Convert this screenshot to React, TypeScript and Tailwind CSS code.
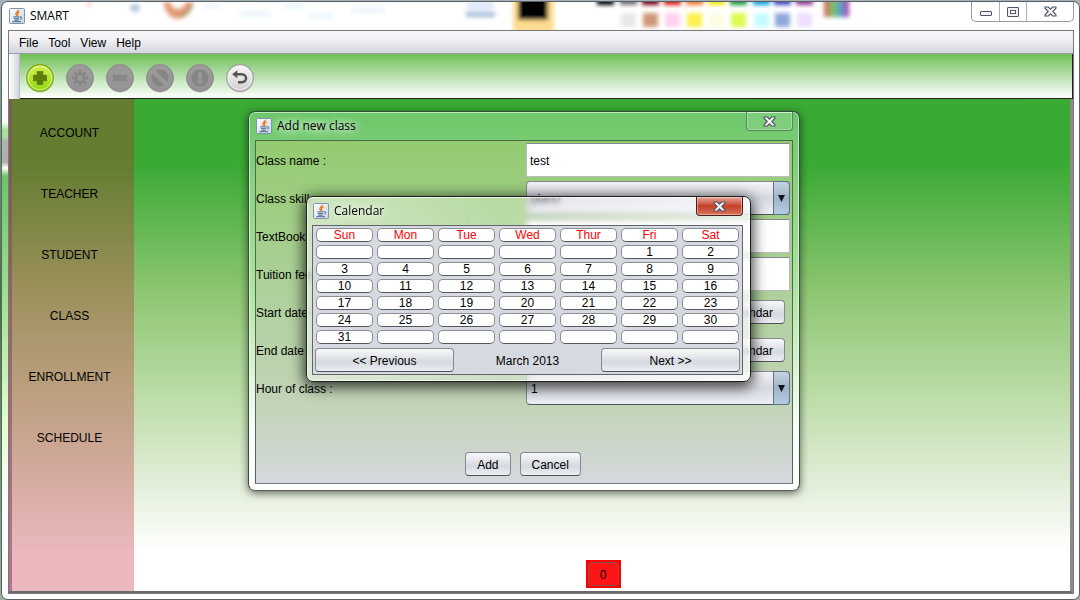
import type { ReactNode } from "react";

const DAYS = ["Sun", "Mon", "Tue", "Wed", "Thur", "Fri", "Sat"];
const FIRST_WEEKDAY = 5;
const DAYS_IN_MONTH = 31;
const CELLS = Array.from({ length: 42 }, (_, i) => {
  const day = i - FIRST_WEEKDAY + 1;
  return day >= 1 && day <= DAYS_IN_MONTH ? String(day) : "";
});
const SECTIONS = ["ACCOUNT", "TEACHER", "STUDENT", "CLASS", "ENROLLMENT", "SCHEDULE"];

function JavaIcon() {
  return (
    <svg width="16" height="16" viewBox="0 0 16 16" className="shrink-0" aria-hidden="true">
      <defs>
        <linearGradient id="tile" x1="0" y1="0" x2="1" y2="1">
          <stop offset="0" stopColor="#ffffff" />
          <stop offset="1" stopColor="#c9d3de" />
        </linearGradient>
      </defs>
      <rect x="0.5" y="0.5" width="15" height="15" rx="1" fill="url(#tile)" stroke="#7f93ab" />
      <path d="M9.200 1.800c.6 1.800-2.900 2.400-2.300 4.200.2.700.9 1 .7 1.900M10.600 3.900c-1.600.6-2.400 1.200-2 2.200.2.700.4 1-.2 1.800" fill="none" stroke="#e8761b" strokeWidth="1.3" />
      <path d="M4.200 8.900h6.400M4.900 10.700h5.300M5.400 12.200h4.200M3.200 13.700h8.800M10.900 8.800c2.600-.5 2.300 2.200.1 2.500" fill="none" stroke="#3f6a96" strokeWidth="1" />
    </svg>
  );
}

function CloseGlyph() {
  return (
    <svg width="13" height="11" viewBox="0 0 13 11" aria-hidden="true">
      <path d="M1 1h3.4l2.1 2.2L8.600 1H12v1.200L8.800 5.500 12 8.800V10H8.600L6.500 7.800 4.400 10H1V8.800l3.200-3.300L1 2.200z" fill="#f4f4f6" stroke="#51555f" strokeWidth="1.1" />
    </svg>
  );
}

function TitleBackdrop() {
  const swatches: [number, string, string][] = [
    [605, "#000000", "#ffffff"],
    [628, "#6f6f6f", "#e8e8e8"],
    [650, "#7d0012", "#cf9878"],
    [672, "#e01818", "#ffd0ec"],
    [694, "#f07a28", "#fff04a"],
    [716, "#f2ec10", "#fdfde0"],
    [738, "#189a3c", "#dcfb50"],
    [761, "#10a0e0", "#c4fcff"],
    [782, "#3a46c4", "#8ea8d8"],
    [804, "#8c3a96", "#ecdfff"],
  ];
  return (
    <svg className="pointer-events-none absolute inset-0 h-full w-full" aria-hidden="true">
      <defs>
        <filter id="soft" x="-30%" y="-30%" width="160%" height="160%">
          <feGaussianBlur stdDeviation="2" />
        </filter>
        <linearGradient id="rainbow">
          <stop offset="0" stopColor="#e06060" />
          <stop offset="0.35" stopColor="#80c060" />
          <stop offset="0.65" stopColor="#50a8c8" />
          <stop offset="1" stopColor="#c030b0" />
        </linearGradient>
      </defs>
      <g filter="url(#soft)" transform="translate(-2 0)">
        <path d="M163 0q4 16 14 17 13-1 16-17l-7 0q-3 7-8 7-6 0-8-7z" fill="#e39a78" />
        <path d="M180 14q9-2 12-12" stroke="#a59a60" strokeWidth="3" fill="none" />
        <ellipse cx="135" cy="6" rx="5" ry="4" fill="#b4c6da" />
        <circle cx="89" cy="2" r="2" fill="#f0b8a0" />
        <path d="M205 4h16M240 12h30M285 4h18M310 14h22M350 8h36" stroke="#edf6fc" strokeWidth="6" />
        <rect x="467" y="0" width="27" height="8" fill="#dce8f8" />
        <rect x="466" y="10" width="29" height="5" fill="#a9bddb" />
        <rect x="513" y="-4" width="41" height="36" fill="#ffdc90" />
        <rect x="518" y="-6" width="30" height="24" fill="#000" />
        {swatches.map(([x, top, low]) => (
          <g key={x}>
            <rect x={x - 8} y="-5" width="17" height="8" fill={top} />
            <rect x={x - 7} y="11" width="15" height="14" fill={low} />
          </g>
        ))}
        <rect x="824" y="-4" width="25" height="19" fill="url(#rainbow)" />
      </g>
    </svg>
  );
}

function ToolButton({ label, tone, children }: { label: string; tone: "green" | "gray" | "white"; children: ReactNode }) {
  const ring = { green: "#7da614", gray: "#8e8e8e", white: "#a0a0a0" }[tone];
  const top = { green: "#d2f04e", gray: "#9c9c9c", white: "#f7f7f7" }[tone];
  const bottom = { green: "#93d80e", gray: "#949494", white: "#cfcfcf" }[tone];
  return (
    <button type="button" aria-label={label} className="block size-7">
      <svg width="28" height="28" viewBox="0 0 28 28" className="overflow-visible">
        <defs>
          <linearGradient id={`tool-${tone}`} x1="0" y1="0" x2="0" y2="1">
            <stop offset="0" stopColor={top} />
            <stop offset="1" stopColor={bottom} />
          </linearGradient>
        </defs>
        <ellipse cx="14" cy="15.500" rx="12.800" ry="13" fill="#000" opacity="0.18" />
        <circle cx="14" cy="14" r="13.300" fill={`url(#tool-${tone})`} stroke={ring} strokeWidth="1.200" />
        {tone !== "gray" && <circle cx="14" cy="14" r="11.800" fill="none" stroke="#fff" strokeOpacity="0.5" />}
        {children}
      </svg>
    </button>
  );
}

function PushButton({ children, className = "" }: { children: ReactNode; className?: string }) {
  return (
    <button
      type="button"
      className={`h-6 rounded-[4px] border border-[#85888e] border-b-[#4f5358] bg-linear-to-b from-[#f8f9fb] via-[#d6d9e0] via-60% to-[#eceef5] px-[11px] pt-[2px] text-black ${className}`}
    >
      {children}
    </button>
  );
}

function Combo({ id, value }: { id: string; value: string }) {
  return (
    <div className="relative h-[34px]">
      <select
        id={id}
        defaultValue={value}
        className="h-full w-full appearance-none rounded-[4px] border border-[#85888e] border-b-[#4f5358] bg-linear-to-b from-[#f4f5f8] via-[#d6d9e0] via-50% to-[#eceef5] pt-[2px] pl-1 text-black"
      >
        <option>{value}</option>
      </select>
      <span className="pointer-events-none absolute inset-y-0 right-0 flex w-[17px] items-center justify-center rounded-r-[4px] border border-[#5c7288] bg-linear-to-b from-[#c5d4e1] via-[#9fb4c8] via-50% to-[#b4cbe4]">
        <svg width="7" height="7" viewBox="0 0 7 7" aria-hidden="true">
          <path d="M0 0h7L3.500 7z" fill="#101418" />
        </svg>
      </span>
    </div>
  );
}

function FormRow({ id, label, children }: { id: string; label: string; children: ReactNode }) {
  return (
    <div className="grid h-[34px] grid-cols-2 items-center gap-[6px]">
      <label htmlFor={id} className="pt-[2px] whitespace-nowrap">{label}</label>
      {children}
    </div>
  );
}

const FIELD = "w-full border border-[#b9bcc2] border-t-[#85888e] bg-white px-[3px] pt-[2px] text-black outline-none";

function AddClassDialog() {
  return (
    <section
      aria-label="Add new class"
      className="absolute top-[111px] left-[248px] flex h-[380px] w-[552px] flex-col rounded-[7px] border border-[#31513a] border-b-[#5c5f5c] bg-linear-to-b from-[#6cc76a] via-[#b4e6a4] via-50% to-white to-85% px-[6px] pb-[6px] shadow-[inset_0_0_0_1px_rgba(255,255,255,0.55),0_2px_9px_rgba(0,0,0,0.6)]"
    >
      <header className="flex h-7 shrink-0 items-center">
        <span className="pl-px">
          <JavaIcon />
        </span>
        <h2 className="pl-[5px] font-['Open_Sans',sans-serif] [text-shadow:0_0_8px_#fff,0_0_8px_#fff]">Add new class</h2>
        <button type="button" aria-label="Close dialog" className="ml-auto flex h-[19px] w-[47px] items-center justify-center self-start rounded-b-[4px] border border-t-0 border-[#4f8a58] bg-white/10 shadow-[inset_0_0_0_1px_rgba(255,255,255,0.3)]">
          <CloseGlyph />
        </button>
      </header>
      <form className="flex grow flex-col gap-1 border border-[#4f6b4f] border-b-[#777b80] bg-linear-to-b from-[#93cb70] via-[#c4d4bb] via-80% to-[#d5d8de] pt-[2px] pr-[2px] pb-[7px]">
        <FormRow id="name" label="Class name :">
          <input id="name" defaultValue="test" className={`${FIELD} h-[34px]`} />
        </FormRow>
        <FormRow id="skill" label="Class skill :">
          <Combo id="skill" value="piano" />
        </FormRow>
        <FormRow id="book" label="TextBook :">
          <input id="book" className={`${FIELD} h-[34px]`} />
        </FormRow>
        <FormRow id="fee" label="Tuition fee :">
          <input id="fee" className={`${FIELD} h-[34px]`} />
        </FormRow>
        <FormRow id="start" label="Start date :">
          <div className="flex items-center gap-[5px] pr-[5px]">
            <input id="start" className={`${FIELD} h-6`} />
            <PushButton>Calendar</PushButton>
          </div>
        </FormRow>
        <FormRow id="end" label="End date :">
          <div className="flex items-center gap-[5px] pr-[5px]">
            <input id="end" className={`${FIELD} h-6`} />
            <PushButton>Calendar</PushButton>
          </div>
        </FormRow>
        <FormRow id="hour" label="Hour of class :">
          <Combo id="hour" value="1" />
        </FormRow>
        <div className="mt-auto flex justify-center gap-[9px]">
          <PushButton>Add</PushButton>
          <PushButton>Cancel</PushButton>
        </div>
      </form>
    </section>
  );
}

function CalendarDialog() {
  const cell = "h-[14px] rounded-[5px] border border-[#8b8e94] border-b-[#54585e] bg-white leading-3";
  return (
    <section
      aria-label="Calendar"
      className="absolute top-[196px] left-[306px] flex h-[186px] w-[445px] flex-col rounded-[7px] border border-[#1d1f1d] bg-linear-to-r from-white/50 via-white/25 via-45% to-white/70 pr-[7px] pb-[6px] pl-[5px] shadow-[inset_0_0_0_1px_rgba(255,255,255,0.7),0_3px_14px_2px_rgba(0,0,0,0.75)] backdrop-blur-[3px]"
    >
      <header className="flex h-7 shrink-0 items-center">
        <span className="pl-px">
          <JavaIcon />
        </span>
        <h2 className="pl-[5px] font-['Open_Sans',sans-serif] [text-shadow:0_0_8px_#fff,0_0_8px_#fff]">Calendar</h2>
        <button type="button" aria-label="Close calendar" className="ml-auto flex h-[19px] w-[47px] items-center justify-center self-start rounded-b-[4px] border border-t-0 border-[#4a1d17] bg-linear-to-b from-[#e6a79b] via-[#c23f26] via-50% to-[#d9745c] shadow-[inset_0_0_0_1px_rgba(255,255,255,0.4)]">
          <CloseGlyph />
        </button>
      </header>
      <div className="flex grow flex-col justify-between border border-[#62656b] bg-[#d6d9df] px-[2px] py-[2px]">
        <div className="grid grid-cols-7 gap-x-1 gap-y-[3px] px-px">
          {DAYS.map((day) => (
            <button key={day} type="button" className={`${cell} text-[#ff0000]`}>{day}</button>
          ))}
          {CELLS.map((day, i) => (
            <button key={i} type="button" aria-label={day || "Empty day"} className={`${cell} text-black`}>{day}</button>
          ))}
        </div>
        <div className="flex items-center justify-between">
          <PushButton className="w-[139px]">&lt;&lt; Previous</PushButton>
          <span className="pt-[2px]">March 2013</span>
          <PushButton className="w-[139px]">Next &gt;&gt;</PushButton>
        </div>
      </div>
    </section>
  );
}

export default function App() {
  return (
    <div className="relative flex min-h-screen flex-col bg-[#aab4ba] bg-linear-to-b from-[#a5b0b8] via-[#2f7f33] via-50% to-[#9db09c] pt-px pl-px font-['Liberation_Sans',Arial,sans-serif] text-[12px] leading-4 text-black">
      <div className="flex grow flex-col rounded-[7px] border border-[#5c6064] bg-white pr-[5px] pb-[5px]">
        <header className="relative flex h-7 items-center overflow-hidden rounded-tl-[6px] pl-[7px]">
          <TitleBackdrop />
          <span className="relative">
            <JavaIcon />
          </span>
          <h1 className="relative pl-[5px] font-['Open_Sans',sans-serif]">SMART</h1>
          <div className="relative ml-auto flex h-5 self-start rounded-b-[5px] border border-t-0 border-[#9b9b9b] bg-white">
            <button type="button" aria-label="Minimize" className="flex w-[28px] items-center justify-center border-r border-[#b0b0b0] pt-1">
              <svg width="12" height="5" viewBox="0 0 12 5"><rect x="0.5" y="0.5" width="11" height="4" rx="0.5" fill="#f4f4f4" stroke="#50556a" /></svg>
            </button>
            <button type="button" aria-label="Maximize" className="flex w-[27px] items-center justify-center border-r border-[#b0b0b0]">
              <svg width="12" height="10" viewBox="0 0 12 10"><rect x="0.5" y="0.5" width="11" height="9" rx="0.5" fill="#f0f0f0" stroke="#50556a" /><rect x="3.500" y="3.500" width="5" height="3" fill="#fff" stroke="#50556a" /></svg>
            </button>
            <button type="button" aria-label="Close" className="flex w-[46px] items-center justify-center">
              <CloseGlyph />
            </button>
          </div>
        </header>

        <div className="flex grow">
          <div className="w-[6px] shrink-0 bg-[linear-gradient(to_bottom,#fff_0_92px,#a9df9c_100px_106px,#b0b0b0_112px_132px,#fff_138px,#6cc568_146px,#a4de94_270px,#e6ffd6_400px,#fff_480px)]" />
          <div className="flex grow flex-col border border-[#77797c]">
            <nav aria-label="Menu" className="flex h-[23px] items-center gap-[10px] border-b border-[#9a9da6] bg-linear-to-b from-[#f6f6f7] via-[#f4f4f7] via-30% to-[#d3d6de] pt-[2px] pl-[10px]">
              <button type="button">File</button>
              <button type="button">Tool</button>
              <button type="button">View</button>
              <button type="button">Help</button>
            </nav>

            <div className="flex h-[45px]">
              <div className="w-[11px] border-r border-[#b4b8c0] bg-linear-to-r from-white to-[#d2d6dc]" />
              <div className="flex grow items-center gap-3 border-r border-b border-[#231f20] bg-linear-to-b from-[#6fbf55] to-white pt-1 pl-[6px]">
                <ToolButton label="Add" tone="green">
                  <path d="M11.200 7.500h5.600v3.700h3.700v5.600h-3.700v3.700h-5.600v-3.700H7.500v-5.600h3.700z" fill="#5c7c0c" stroke="#4c6a08" strokeWidth="0.6" />
                </ToolButton>
                <ToolButton label="Settings" tone="gray">
                  <path d="M14 6v16M6 14h16M8.300 8.300l11.400 11.400M19.700 8.300 8.300 19.700" stroke="#868686" strokeWidth="2.400" />
                  <circle cx="14" cy="14" r="5.300" fill="#868686" />
                  <circle cx="14" cy="14" r="2.900" fill="#989898" />
                </ToolButton>
                <ToolButton label="Remove" tone="gray">
                  <rect x="7.300" y="11.300" width="13.500" height="5.500" fill="#888888" stroke="#808080" strokeWidth="0.6" />
                </ToolButton>
                <ToolButton label="Disable" tone="gray">
                  <circle cx="14" cy="14" r="8.500" fill="#868686" />
                  <path d="M7.500 7.500l13 13" stroke="#999" strokeWidth="4.200" />
                </ToolButton>
                <ToolButton label="Power" tone="gray">
                  <circle cx="14" cy="14" r="8.500" fill="#868686" />
                  <rect x="12" y="8" width="4" height="12" rx="1.500" fill="#979797" />
                </ToolButton>
                <ToolButton label="Undo" tone="white">
                  <path d="M10 10.300h5.800a4.200 3.900 0 0 1 0 7.900H12" fill="none" stroke="#555" strokeWidth="2.500" />
                  <path d="M11.300 6.300v8L6.100 10.300z" fill="#555" />
                </ToolButton>
              </div>
            </div>

            <div className="flex grow border-r-[3px] border-b-2 border-r-[#8b8b8b] border-b-[#6d696b] bg-[linear-gradient(to_bottom,#3aaa34_0_65px,#8cc571_190px,#b9dba4_290px,#e1eed8_383px,#fff_453px)]">
              <aside className="w-[125px] border-l-[3px] border-l-[rgba(140,70,100,0.6)] bg-[rgba(190,30,45,0.315)] pt-[3px] pr-[7px]">
                {SECTIONS.map((name) => (
                  <button key={name} type="button" className="block h-[61px] w-full text-center">{name}</button>
                ))}
              </aside>
              <main className="flex grow flex-col items-center justify-end pb-[3px] pl-[2px]">
                <div className="bg-[#ff0000] p-[2px]">
                  <button type="button" className="block h-6 w-[31px] rounded-[4px] border border-[#8a5050] bg-[#ff1515] pt-[2px]">0</button>
                </div>
              </main>
            </div>
          </div>
        </div>
      </div>

      <AddClassDialog />
      <CalendarDialog />
    </div>
  );
}
